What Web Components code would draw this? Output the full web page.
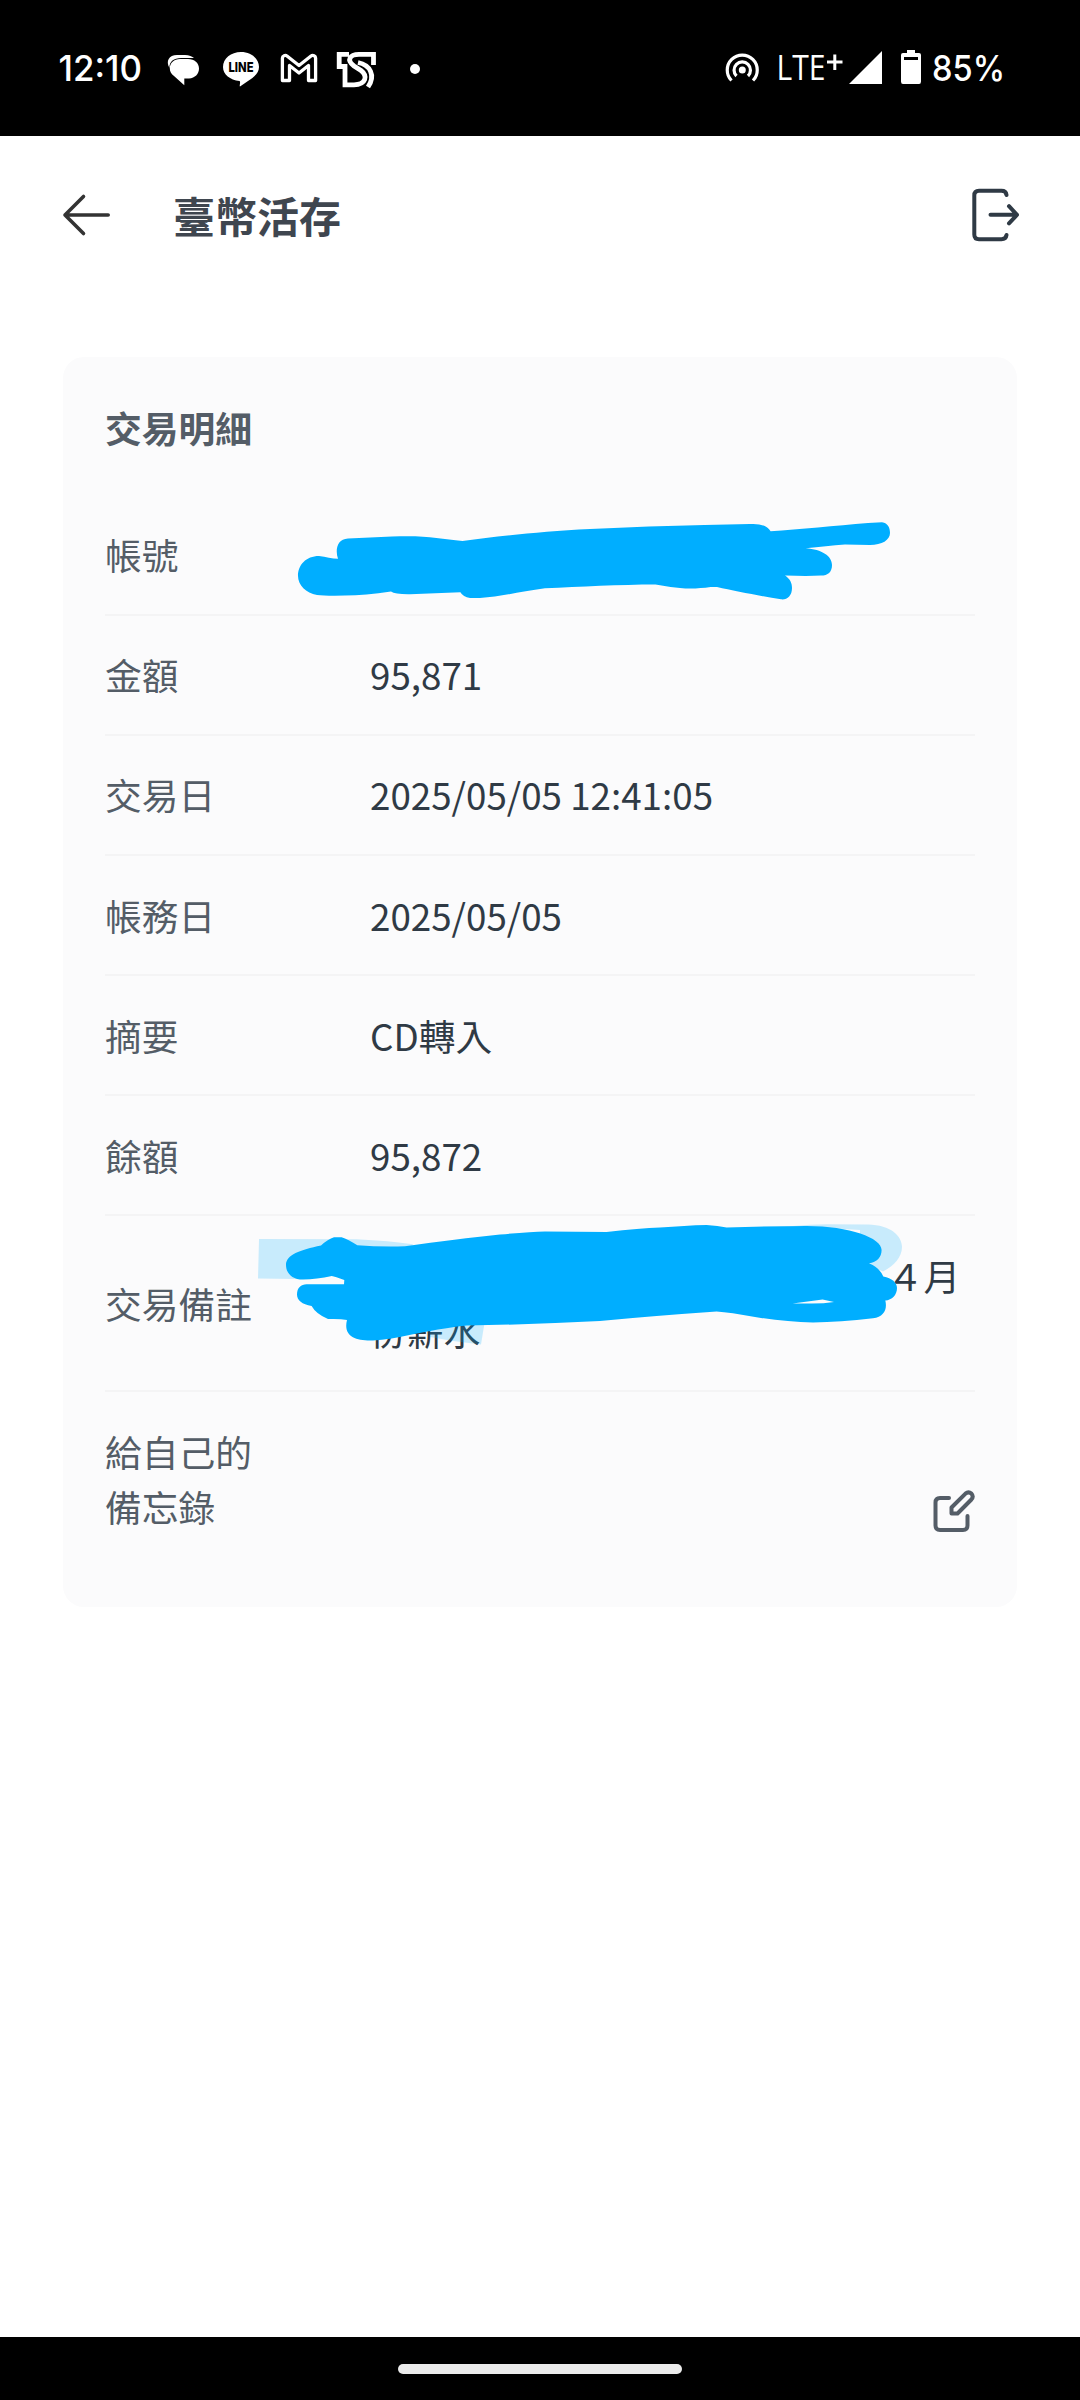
<!DOCTYPE html>
<html lang="zh-Hant">
<head>
<meta charset="utf-8">
<title>臺幣活存</title>
<style>
  body {
    margin: 0;
    background: #fff;
    font-family: "Noto Sans CJK TC", "Noto Sans", sans-serif;
  }
</style>
</head>
<body>
<bank-screen>
  <status-bar slot="top"></status-bar>
  <page-header slot="top">臺幣活存</page-header>
  <detail-card>
    <span slot="title">交易明細</span>
    <detail-row label="帳號"></detail-row>
    <detail-row label="金額">95,871</detail-row>
    <detail-row label="交易日">2025/05/05 12:41:05</detail-row>
    <detail-row label="帳務日">2025/05/05</detail-row>
    <detail-row label="摘要">CD轉入</detail-row>
    <detail-row label="餘額">95,872</detail-row>
    <detail-row label="交易備註" class="remark">４月份薪水</detail-row>
    <detail-row label="給自己的備忘錄" class="memo"><edit-icon></edit-icon></detail-row>
    <marker-strokes slot="overlay"></marker-strokes>
  </detail-card>
  <nav-bar slot="bottom"></nav-bar>
</bank-screen>

<script>
class BankScreen extends HTMLElement {
  constructor() {
    super();
    this.shadowDOM = this.attachShadow({ mode: "open" });
    this.shadowDOM.innerHTML = `
    <style>
    :host {
      display: flex;
      flex-direction: column;
      width: 1080px;
      height: 2400px;
      overflow: hidden;
    }
    main {
      flex: 1;
      padding: 79px 63px 0;
    }
    </style>
    <slot name="top"></slot>
    <main><slot></slot></main>
    <slot name="bottom"></slot>`;
  }
}

class StatusBar extends HTMLElement {
  constructor() {
    super();
    this.shadowDOM = this.attachShadow({ mode: "open" });
    this.shadowDOM.innerHTML = `
    <style>
    :host {
      display: flex;
      align-items: center;
      justify-content: space-between;
      box-sizing: border-box;
      height: 136px;
      padding: 0 76px 0 58px;
      background: #000;
    }
    div {
      display: flex;
      align-items: center;
    }
    svg {
      display: block;
      height: 44px;
      fill: #fff;
      overflow: visible;
    }
    text {
      font-family: Inter, Roboto, sans-serif;
    }
    .line {
      fill: none;
      stroke: #fff;
    }
    </style>
    <div>
      <svg width="84" viewBox="58 46 84 44"><text x="58.500" y="81" font-size="36" font-weight="500" textLength="83.500" lengthAdjust="spacingAndGlyphs">12:10</text></svg>
      <svg width="33" viewBox="167 46 33 44" style="margin-left:25px">
        <path d="M169.500 68C165.500 61 169 55 177 55H185C189 55 192.500 56.500 194 58H181C174 58 169 61.500 169.500 68Z"/>
        <path d="M180 59H188C194.500 59 199 63 199 68.500C199 74 195 78 189 78.500H184.300V85.200L174 76C171.500 74 169.800 71.500 169.800 68.500C169.800 63 174 59 180 59Z"/>
      </svg>
      <svg width="36" viewBox="223 46 36 44" style="margin-left:23px">
        <path d="M241 52C251 52 259 58.500 259 67C259 73 254 77 248 81L240 86.500C239 86 241 82 239.500 81C230 80 223 74.500 223 67C223 58.500 231 52 241 52Z"/>
        <text x="228.500" y="72" font-size="13.500" font-weight="800" fill="#000" textLength="25" lengthAdjust="spacingAndGlyphs">LINE</text>
      </svg>
      <svg width="37" viewBox="281 46 37 44" style="margin-left:22px">
        <path class="line" stroke-width="3.300" stroke-linejoin="round" d="M284 55.800C282.800 56.200 282.400 57 282.400 58V80.500H289.500V65.500L299 73L308.500 65.500V80.500H315.600V58C315.600 56 313 54.500 311 56L299 65.500L287 56C286 55.300 285 55.300 284 55.800Z"/>
      </svg>
      <svg width="40" viewBox="337 46 40 44" style="margin-left:19px">
        <g class="line" stroke-width="4.800">
          <path d="M349 54.300H339.200V66.500H345V84.800H354C366 84.800 368 76 361 70.500L354 66C346 60 350 54.300 359 54.300H373.500V65"/>
          <path d="M358 62.500C370 65 376 75 368 87"/>
        </g>
      </svg>
      <svg width="10" viewBox="410 46 10 44" style="margin-left:33px"><circle cx="415" cy="69" r="5"/></svg>
    </div>
    <div>
      <svg width="34" viewBox="725 46 34 44">
        <g class="line" stroke-width="3.200">
          <path d="M731.500 80.500A15 15 0 1 1 753 80.500"/>
          <path d="M736.500 76A8.200 8.200 0 1 1 748 76"/>
        </g>
        <circle cx="742.300" cy="70" r="3.500"/>
      </svg>
      <svg width="65" viewBox="778 46 65 44" style="margin-left:19px">
        <text x="776.500" y="79.500" style="font-family:'Open Sans'" font-size="35" font-weight="400" textLength="49" lengthAdjust="spacingAndGlyphs">LTE</text>
        <path class="line" stroke-width="3" d="M827 62H842.500M834.800 54.500V70"/>
      </svg>
      <svg width="33" viewBox="849 46 33 44" style="margin-left:6px"><path d="M849 84L882 51V84Z"/></svg>
      <svg width="20" viewBox="901 46 20 44" style="margin-left:19px">
        <path fill-rule="evenodd" d="M907 50H915V53H919Q921 53 921 55V81.500Q921 84 919 84H903Q901 84 901 81.500V55Q901 53 903 53H907ZM904 57V60H918V57Z"/>
      </svg>
      <svg width="72" viewBox="932 46 72 44" style="margin-left:11px"><text x="932" y="81" font-size="36" font-weight="500" textLength="73" lengthAdjust="spacingAndGlyphs">85%</text></svg>
    </div>`;
  }
}

class PageHeader extends HTMLElement {
  constructor() {
    super();
    this.shadowDOM = this.attachShadow({ mode: "open" });
    this.shadowDOM.innerHTML = `
    <style>
    :host {
      display: flex;
      align-items: center;
      box-sizing: border-box;
      height: 142px;
      padding: 16px 60px 0 62px;
    }
    h1 {
      flex: 1;
      margin: 0 0 0 62px;
      font-size: 42px;
      line-height: 60px;
      font-weight: 700;
      color: #3f464f;
    }
    svg {
      display: block;
      fill: none;
      stroke-linecap: round;
      stroke-linejoin: round;
    }
    </style>
    <svg width="49" height="44" viewBox="62 193 49 44" stroke="#333" stroke-width="3.600"><path d="M108.200 215H65M83.500 196.500L65 215L83.500 233.500"/></svg>
    <h1><slot></slot></h1>
    <svg width="50" height="54" viewBox="970 188 50 54" stroke="#2f3a45" stroke-width="4"><path d="M1006.500 195Q1006 190.800 1001.500 190.800H979Q974.300 190.800 974.300 195.500V234.500Q974.300 239.200 979 239.200H1001.500Q1006 239.200 1006.500 235M990.500 214.800H1017M1009 206.200L1017 214.800L1009 223.400"/></svg>`;
  }
}

class DetailCard extends HTMLElement {
  constructor() {
    super();
    this.shadowDOM = this.attachShadow({ mode: "open" });
    this.shadowDOM.innerHTML = `
    <style>
    :host {
      display: block;
      position: relative;
      box-sizing: border-box;
      height: 1250px;
      padding: 43px 42px 42px;
      border-radius: 21px;
      background: #fbfbfc;
    }
    h2 {
      margin: 0 0 41px;
      font-size: 36.75px;
      line-height: 55px;
      font-weight: 700;
      color: #545d67;
    }
    </style>
    <h2><slot name="title"></slot></h2>
    <slot></slot>
    <slot name="overlay"></slot>`;
  }
}

class DetailRow extends HTMLElement {
  constructor() {
    super();
    this.shadowDOM = this.attachShadow({ mode: "open" });
  }

  connectedCallback() {
    this.render();
  }

  render() {
    this.shadowDOM.innerHTML = `
    <style>
    :host {
      display: flex;
      align-items: center;
      box-sizing: border-box;
      height: 120px;
      padding-bottom: 2px;
      border-bottom: 2px solid #f4f4f5;
      font-size: 36.75px;
      line-height: 55px;
      color: #2f3a45;
    }
    :host(:nth-of-type(n+4)) {
      padding-bottom: 0;
    }
    :host(.remark) {
      height: 176px;
    }
    /* the first fourteen characters of the remark are blanked out */
    :host(.remark) .value {
      text-indent: 14.06em;
    }
    :host(.memo) {
      height: 173px;
      border-bottom: 0;
    }
    :host(.memo) .value {
      display: flex;
      justify-content: flex-end;
      align-self: flex-end;
      padding-bottom: 33px;
    }
    .label {
      width: 160px;
      margin-right: 105px;
      color: #545d67;
    }
    .value {
      flex: 1;
    }
    </style>
    <div class="label">${this.getAttribute("label")}</div>
    <div class="value"><slot></slot></div>`;
  }
}

class EditIcon extends HTMLElement {
  constructor() {
    super();
    this.shadowDOM = this.attachShadow({ mode: "open" });
    this.shadowDOM.innerHTML = `
    <style>
    :host {
      display: block;
      width: 42px;
      height: 42px;
    }
    svg {
      display: block;
      fill: none;
      stroke: #545d67;
      stroke-width: 4;
      stroke-linecap: round;
      stroke-linejoin: round;
    }
    </style>
    <svg width="42" height="42" viewBox="0 0 42 42">
      <path d="M16 8H7Q2.500 8 2.500 12.500V35.500Q2.500 40 7 40H30Q34.500 40 34.500 35.500V26"/>
      <path d="M18.500 23.500V17.500L32.500 3.600Q35.500 1 38.400 3.600Q41 6.500 38.400 9.500L24.500 23.500Z"/>
    </svg>`;
  }
}

class MarkerStrokes extends HTMLElement {
  constructor() {
    super();
    this.shadowDOM = this.attachShadow({ mode: "open" });
    this.shadowDOM.innerHTML = `
    <style>
    :host {
      position: absolute;
      inset: 0;
      pointer-events: none;
    }
    svg {
      display: block;
    }
    .solid {
      fill: #00aeff;
    }
    .soft {
      fill: #00aeff;
      fill-opacity: 0.2;
    }
    </style>
    <svg width="954" height="1250" viewBox="63 357 954 1250">
      <path class="solid" d="M338 558.700C335 550 337 539 348 538.500L392 536.500C425 535 440 538.500 462.500 541C500 536 540 531.500 590 529Q650 526 704.500 525L750 524Q766 523 770.600 531.300C800 529 835 526 868 523L882 522.300C888 523 890 528 890 533C890 540 882 545 870 545L845 544.600C832 545 820 547.500 805.700 548.300C822 549.500 832 556 832 565C832 572 828 575.600 821 575.600Q808 576.500 785 575.600C790 579 792 583 792 588C792 596 787 600 781 599.300C760 596 735 591 717 587L710.600 587C700 588.500 690 589 680 588Q668 587 655.500 584.600C620 584.600 580 587 545 588.300C520 591.500 500 597 480 598H470Q463 597 460.400 592.300L410 594.300Q395 594.500 391 591.600Q365 595.600 345 595.600Q325 596 317 595C306 593 298 585 298 576C298 565 306 556 319 556C326 557 332 558.700 338 558.700Z"/>
      <path class="soft" d="M259 1239L356.600 1239.300Q390 1241 413 1244.300L405 1260H345L331.700 1276L296.600 1279L258 1278.600Z"/>
      <path class="soft" d="M793 1226Q810 1224.300 826.600 1224.300L868 1224.500C891 1225 902 1236 902 1247C902 1257 894 1266 883 1271.600L860 1262V1230Z"/>
      <path class="soft" d="M430 1331L466 1320H485L481 1344.600Q455 1342 430 1337Z"/>
      <path class="solid" fill-rule="evenodd" d="M344.300 1280Q335 1276.500 331.700 1276C322 1278 312 1279.600 303 1279.600C292 1279.600 286 1273 286 1265C286 1255 300 1250 321 1245.600Q328 1239 334 1237.300H341.600Q348 1239.500 357.300 1245.300Q380 1247 405 1246.300C440 1241 470 1238 500 1234.500Q530 1232 545 1231.500L606.600 1232Q640 1228.500 660 1227.600Q685 1225.500 706.600 1225Q718 1225.500 726.600 1227.600Q766 1226 806.600 1226C850 1226 881.600 1238 881.600 1250C881.600 1257 877 1262.500 869 1263.300Q880 1268 883.300 1276.600C892 1278 897 1283 897 1288C897 1295 892 1300 885.300 1300.600C887.500 1309 884 1317 873 1318.300Q840 1322 813 1322.600Q785 1322 755 1317Q730 1312.500 716.600 1311.600Q660 1315.500 600 1321Q530 1324.500 466.600 1325.600Q450 1327 413 1334.300Q390 1339.500 373 1340.400C355 1341 343 1336 347 1320Q340 1318.500 328 1319Q316 1314 311.600 1306C302 1304.500 297 1300 297 1294.500C297 1288 301 1284.300 306.600 1284.300H344ZM792.600 1303.600H812Q824 1303.500 834 1302L822.600 1299.500Z"/>
    </svg>`;
  }
}

class NavBar extends HTMLElement {
  constructor() {
    super();
    this.shadowDOM = this.attachShadow({ mode: "open" });
    this.shadowDOM.innerHTML = `
    <style>
    :host {
      display: flex;
      align-items: center;
      justify-content: center;
      height: 63px;
      background: #000;
    }
    div {
      width: 284px;
      height: 10px;
      border-radius: 5px;
      background: #ebebeb;
    }
    </style>
    <div></div>`;
  }
}

customElements.define("bank-screen", BankScreen);
customElements.define("status-bar", StatusBar);
customElements.define("page-header", PageHeader);
customElements.define("detail-card", DetailCard);
customElements.define("detail-row", DetailRow);
customElements.define("edit-icon", EditIcon);
customElements.define("marker-strokes", MarkerStrokes);
customElements.define("nav-bar", NavBar);
</script>
</body>
</html>
